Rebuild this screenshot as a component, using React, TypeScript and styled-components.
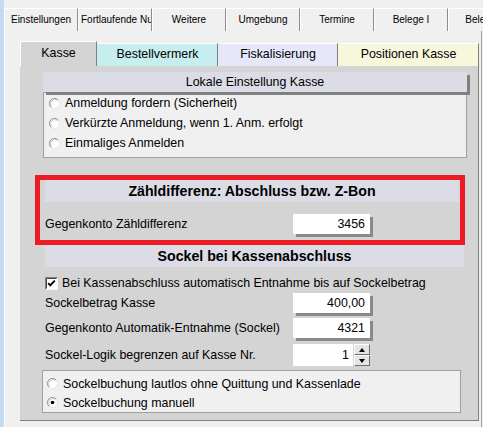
import styled, { createGlobalStyle } from "styled-components";

const GlobalStyle = createGlobalStyle`
  html, body { margin: 0; padding: 0; }
  body {
    background: #f0f0f0;
    font-family: "Liberation Sans", Arial, sans-serif;
    font-size: 12.4px;
    color: #000;
  }
  #root { width: 483px; height: 427px; overflow: hidden; }
`;

type TInnerTab = { label: string; width: number; bg: string; active?: boolean };

const topTabs = [
  "Einstellungen",
  "Fortlaufende Nummern",
  "Weitere",
  "Umgebung",
  "Termine",
  "Belege I",
  "Belege II",
];

const innerTabs: TInnerTab[] = [
  { label: "Kasse", width: 77, bg: "#d4d4d4", active: true },
  { label: "Bestellvermerk", width: 121, bg: "#c6eeee" },
  { label: "Fiskalisierung", width: 120, bg: "#e7e7fa" },
  { label: "Positionen Kasse", width: 141, bg: "#f7f7dc" },
];

const RadioMark = ({ checked }: { checked?: boolean }) => (
  <svg width="11" height="11" viewBox="0 0 12 12">
    <circle cx="6" cy="6" r="5.5" fill="#fff" stroke="#e2e2e2" />
    <path d="M2.1 9.9A5.5 5.5 0 0 1 9.9 2.1" fill="none" stroke="#8a8a8a" />
    <path d="M2.9 9.1A4.4 4.4 0 0 1 9.1 2.9" fill="none" stroke="#c8c8c8" />
    {checked && <circle cx="6" cy="6" r="2" fill="#000" />}
  </svg>
);

const CheckMark = () => (
  <svg width="13" height="13" viewBox="0 0 13 13">
    <rect x="0.5" y="0.5" width="12" height="12" fill="#fff" stroke="#f4f4f4" />
    <path d="M0.5 12.5V0.5H12.5" fill="none" stroke="#808080" />
    <path d="M1.5 11.5V1.5H11.5" fill="none" stroke="#404040" />
    <path d="M3.2 6.2L5.2 8.4L9.8 3.6" fill="none" stroke="#000" strokeWidth="1.8" />
  </svg>
);

const App = () => {
  return (
    <Window>
      <GlobalStyle />
      <BlueEdge />
      <Main>
        <TopTabs>
          {topTabs.map((t) => (
            <TopTab key={t}>{t}</TopTab>
          ))}
        </TopTabs>
        <Page>
          <InnerTabs>
            {innerTabs.map((t) => (
              <InnerTab key={t.label} $w={t.width} $bg={t.bg} $active={t.active}>
                {t.label}
              </InnerTab>
            ))}
          </InnerTabs>
          <Panel>
            <BarHeader>Lokale Einstellung Kasse</BarHeader>
            <OptionBox $h={66} $pt={0} $pl={5} $ml={0} $mr={11}>
              <Option $h={20}>
                <RadioMark />
                Anmeldung fordern (Sicherheit)
              </Option>
              <Option $h={20}>
                <RadioMark />
                Verkürzte Anmeldung, wenn 1. Anm. erfolgt
              </Option>
              <Option $h={20}>
                <RadioMark />
                Einmaliges Anmelden
              </Option>
            </OptionBox>

            <Highlight>
              <SectionTitle $ml={5} $mr={1}>
                Zähldifferenz: Abschluss bzw. Z-Bon
              </SectionTitle>
              <FieldRow $pl={5} $pt={6} $h={32}>
                <span>Gegenkonto Zähldifferenz</span>
                <ValueBox>3456</ValueBox>
              </FieldRow>
            </Highlight>

            <SectionTitle $ml={2} $mr={14}>
              Sockel bei Kassenabschluss
            </SectionTitle>
            <CheckRow>
              <CheckMark />
              Bei Kassenabschluss automatisch Entnahme bis auf Sockelbetrag
            </CheckRow>
            <FieldRow $pl={2} $h={20}>
              <span>Sockelbetrag Kasse</span>
              <ValueBox>400,00</ValueBox>
            </FieldRow>
            <FieldRow $pl={2} $mt={5} $h={20}>
              <span>Gegenkonto Automatik-Entnahme (Sockel)</span>
              <ValueBox>4321</ValueBox>
            </FieldRow>
            <FieldRow $pl={2} $mt={6} $h={22}>
              <span>Sockel-Logik begrenzen auf Kasse Nr.</span>
              <SpinField>
                <SpinValue>1</SpinValue>
                <SpinButtons>
                  <SpinButton $up />
                  <SpinButton />
                </SpinButtons>
              </SpinField>
            </FieldRow>

            <OptionBox $h={43} $pt={3} $pl={4} $ml={-1} $mr={17} $mt={4}>
              <Option $h={19}>
                <RadioMark />
                Sockelbuchung lautlos ohne Quittung und Kassenlade
              </Option>
              <Option $h={19}>
                <RadioMark checked />
                Sockelbuchung manuell
              </Option>
            </OptionBox>
          </Panel>
        </Page>
      </Main>
    </Window>
  );
};

const Window = styled.div`
  display: flex;
  height: 427px;
`;

const BlueEdge = styled.div`
  width: 4px;
  flex-shrink: 0;
  background: #c4daf1;
`;

const Main = styled.div`
  flex: 1;
  min-width: 0;
  display: flex;
  flex-direction: column;
  padding-top: 8px;
`;

const TopTabs = styled.div`
  display: flex;
  height: 23px;
  flex-shrink: 0;
  overflow: hidden;
`;

const TopTab = styled.div`
  flex: 0 0 74px;
  box-sizing: border-box;
  border-top: 1px solid #fff;
  border-left: 1px solid #fff;
  border-right: 1px solid #8c8c8c;
  padding: 0 2px;
  font-size: 10px;
  line-height: 22px;
  text-align: center;
  white-space: nowrap;
  overflow: hidden;
`;

const Page = styled.div`
  flex: 1;
  display: flex;
  flex-direction: column;
  border-left: 1px solid #fff;
  border-right: 1px solid #a0a0a0;
  margin-right: 1px;
  padding: 10px 0 0 15px;
`;

const InnerTabs = styled.div`
  display: flex;
  align-items: flex-end;
  height: 25px;
  flex-shrink: 0;
`;

const InnerTab = styled.div<{ $w: number; $bg: string; $active?: boolean }>`
  width: ${({ $w }) => $w}px;
  height: ${({ $active }) => ($active ? 25 : 23)}px;
  box-sizing: border-box;
  background: ${({ $bg }) => $bg};
  border-top: 1px solid #fff;
  border-left: 1px solid ${({ $active }) => ($active ? "#fff" : "transparent")};
  border-right: 1px solid #808080;
  border-top-left-radius: 2px;
  line-height: ${({ $active }) => ($active ? 23 : 21)}px;
  text-align: center;
  white-space: nowrap;
`;

const Panel = styled.div`
  flex: 1;
  display: flex;
  flex-direction: column;
  background: #d4d4d4;
  border-right: 1px solid #808080;
  border-bottom: 1px solid #808080;
  margin: 0 2px 6px 0;
  padding: 6px 0 0 23px;
  overflow: hidden;
`;

const BarHeader = styled.div`
  position: relative;
  z-index: 1;
  height: 20px;
  margin-right: 11px;
  background: #dcdce6;
  box-shadow: 3px 3px 0 #808080;
  line-height: 20px;
  text-align: center;
  flex-shrink: 0;
`;

const OptionBox = styled.div<{
  $h: number;
  $pt: number;
  $pl: number;
  $ml: number;
  $mr: number;
  $mt?: number;
}>`
  box-sizing: border-box;
  height: ${({ $h }) => $h}px;
  margin: ${({ $mt = 0, $mr, $ml }) => `${$mt}px ${$mr}px 0 ${$ml}px`};
  padding: ${({ $pt, $pl }) => `${$pt}px 0 0 ${$pl}px`};
  background: #f0f0f0;
  border: 1px solid #a0a0a0;
  flex-shrink: 0;
  overflow: hidden;
`;

const Option = styled.div<{ $h: number }>`
  display: flex;
  align-items: center;
  gap: 5px;
  height: ${({ $h }) => $h}px;
  white-space: nowrap;
`;

const Highlight = styled.div`
  box-sizing: border-box;
  height: 70px;
  margin: 17px 13px 0 -8px;
  border: 5px solid #ed1c24;
  flex-shrink: 0;
`;

const SectionTitle = styled.div<{ $ml: number; $mr: number }>`
  height: 22px;
  margin: ${({ $ml, $mr }) => `0 ${$mr}px 0 ${$ml}px`};
  background: #dcdce6;
  font-size: 14.2px;
  font-weight: bold;
  line-height: 22px;
  text-align: center;
  white-space: nowrap;
  flex-shrink: 0;
`;

const FieldRow = styled.div<{ $pl: number; $pt?: number; $mt?: number; $h: number }>`
  display: grid;
  grid-template-columns: 248px auto;
  align-items: center;
  height: ${({ $h }) => $h}px;
  margin-top: ${({ $mt = 0 }) => $mt}px;
  padding: ${({ $pt = 0, $pl }) => `${$pt}px 0 0 ${$pl}px`};
  white-space: nowrap;
  flex-shrink: 0;
`;

const ValueBox = styled.div`
  box-sizing: border-box;
  width: 77px;
  height: 20px;
  padding-right: 5px;
  background: #fff;
  box-shadow: 3px 3px 0 #8a8a8a;
  line-height: 20px;
  text-align: right;
`;

const CheckRow = styled.div`
  display: flex;
  align-items: center;
  gap: 4px;
  height: 20px;
  padding: 6px 0 0 2px;
  white-space: nowrap;
  flex-shrink: 0;
`;

const SpinField = styled.div`
  display: flex;
  gap: 1px;
  width: 77px;
  height: 22px;
`;

const SpinValue = styled.div`
  flex: 1;
  padding-right: 4px;
  background: #fff;
  line-height: 22px;
  text-align: right;
`;

const SpinButtons = styled.div`
  display: flex;
  flex-direction: column;
  width: 16px;
`;

const SpinButton = styled.div<{ $up?: boolean }>`
  flex: 1;
  box-sizing: border-box;
  display: flex;
  align-items: center;
  justify-content: center;
  background: #e4e4e4;
  border: 1px solid;
  border-color: #fff #6e6e6e #6e6e6e #fff;

  &::after {
    content: "";
    width: 0;
    height: 0;
    border-left: 3.5px solid transparent;
    border-right: 3.5px solid transparent;
    ${({ $up }) =>
      $up ? "border-bottom: 4px solid #000;" : "border-top: 4px solid #000;"}
  }
`;

export default App;
